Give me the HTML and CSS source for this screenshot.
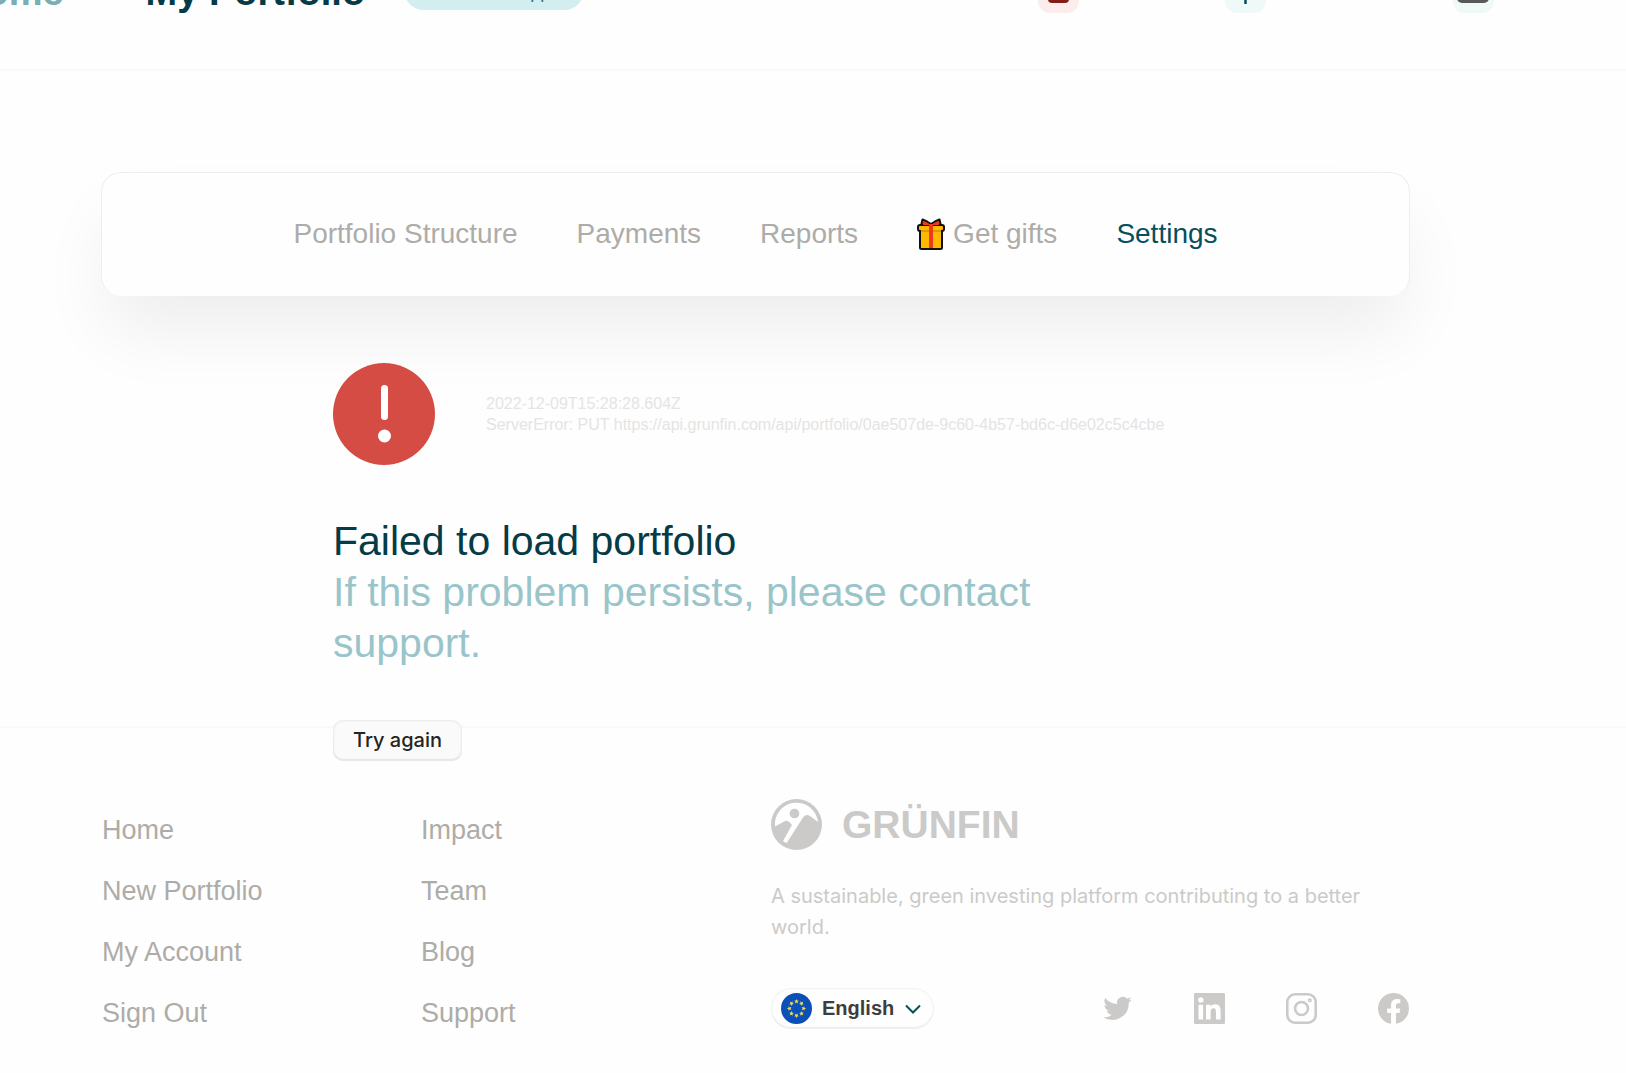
FILE: index.html
```
<!DOCTYPE html>
<html lang="en">
<head>
    <meta charset="UTF-8">
    <meta name="viewport" content="width=device-width, initial-scale=1">
    <title>My Portfolio</title>
    <link rel="stylesheet" href="styles.css">
</head>
<body>

    <header class="topbar">
        <nav class="breadcrumb">
            <a href="#" class="crumb">Home</a>
            <svg class="crumb-arrow" viewBox="0 0 12 24"><path d="M2 4l9 9-9 9"/></svg>
            <h1 class="crumb-current">My Portfolio</h1>
            <span class="status">Account is stopped</span>
        </nav>
        <div class="actions">
            <button class="action danger" aria-label="Stop">
                <svg viewBox="0 0 41 41"><rect x="10" y="10" width="21" height="21" rx="4" fill="#7f1d18"/></svg>
            </button>
            <button class="action" aria-label="Add">
                <svg viewBox="0 0 41 41"><path d="M20.500 9v23M9 20.500h23" stroke="#05505c" stroke-width="2.500"/></svg>
            </button>
            <button class="action" aria-label="Account">
                <svg viewBox="0 0 41 41"><rect x="4" y="9" width="32" height="22" rx="5" fill="#5a5757"/></svg>
            </button>
        </div>
    </header>

    <main>
        <nav class="tabs">
            <a href="#">Portfolio Structure</a>
            <a href="#">Payments</a>
            <a href="#">Reports</a>
            <a href="#" class="gifts">
                <svg viewBox="0 0 28 32">
                    <path d="M4 8L5.500 1.500 10 3.500 14 6l4-2.500 4.500-2L24 8z" fill="#f03a17" stroke="#111" stroke-width="2" stroke-linejoin="round"/>
                    <rect x="3" y="10" width="22" height="21" rx="1.500" fill="#ffb800" stroke="#111" stroke-width="2"/>
                    <rect x="1" y="7" width="26" height="6" rx="2" fill="#ffb800" stroke="#111" stroke-width="2"/>
                    <path d="M4 13h20" stroke="#e09a00" stroke-width="2"/>
                    <path d="M6 7l1-4 7 4 7-4 1 4z" fill="#f03a17"/>
                    <path d="M14 6v24" stroke="#f03a17" stroke-width="4"/>
                </svg>
                Get gifts
            </a>
            <a href="#" class="active">Settings</a>
        </nav>

        <section class="error">
            <div class="error-head">
                <svg class="error-icon" viewBox="0 0 102 102">
                    <circle cx="51" cy="51" r="51" fill="#d44c43"/>
                    <path d="M51.500 25.500v28" stroke="#fff" stroke-width="7" stroke-linecap="round"/>
                    <circle cx="51.500" cy="73" r="6.500" fill="#fff"/>
                </svg>
                <p class="error-details">2022-12-09T15:28:28.604Z<br>ServerError: PUT https://api.grunfin.com/api/portfolio/0ae507de-9c60-4b57-bd6c-d6e02c5c4cbe</p>
            </div>
            <h2>Failed to load portfolio</h2>
            <p class="error-hint">If this problem persists, please contact support.</p>
            <button class="retry">Try again</button>
        </section>
    </main>

    <footer>
        <ul class="links">
            <li><a href="#">Home</a></li>
            <li><a href="#">New Portfolio</a></li>
            <li><a href="#">My Account</a></li>
            <li><a href="#">Sign Out</a></li>
        </ul>
        <ul class="links">
            <li><a href="#">Impact</a></li>
            <li><a href="#">Team</a></li>
            <li><a href="#">Blog</a></li>
            <li><a href="#">Support</a></li>
        </ul>
        <div class="about">
            <div class="brand">
                <svg viewBox="0 0 51 51">
                    <circle cx="25.500" cy="25.500" r="25.500" fill="#cbcac9"/>
                    <path d="M4 27.500A21.500 21.500 0 0 1 47 23l-8-6q-4-2.500-7 1.500L16 43.500q-1.500 1-4-1.500L21 26q-4-5-7-4z" fill="#fff"/>
                    <circle cx="23.500" cy="14.500" r="4.800" fill="#cbcac9"/>
                </svg>
                <span>GRÜNFIN</span>
            </div>
            <p>A sustainable, green investing platform contributing to a better world.</p>
            <div class="about-bottom">
                <label class="language">
                    <svg class="flag" viewBox="0 0 31 31">
                        <circle cx="15.500" cy="15.500" r="15.500" fill="#0b50b8"/>
                        <g fill="#f4d94a">
                            <path id="star" d="M15.500 6l.7 1.500 1.600.2-1.200 1.100.3 1.600-1.400-.8-1.400.8.300-1.600-1.200-1.100 1.600-.2z"/>
                            <use href="#star" transform="rotate(45 15.500 15.500)"/>
                            <use href="#star" transform="rotate(90 15.500 15.500)"/>
                            <use href="#star" transform="rotate(135 15.500 15.500)"/>
                            <use href="#star" transform="rotate(180 15.500 15.500)"/>
                            <use href="#star" transform="rotate(225 15.500 15.500)"/>
                            <use href="#star" transform="rotate(270 15.500 15.500)"/>
                            <use href="#star" transform="rotate(315 15.500 15.500)"/>
                        </g>
                    </svg>
                    <select aria-label="Language">
                        <option>English</option>
                    </select>
                    <svg class="chevron" viewBox="0 0 16 10"><path d="M1 1.500l7 7 7-7"/></svg>
                </label>
                <div class="social">
                    <a href="#" aria-label="Twitter">
                        <svg viewBox="0 0 24 24"><path d="M23 5.100c-.8.400-1.700.6-2.600.7.900-.6 1.600-1.400 2-2.500-.9.500-1.900.9-2.900 1.100A4.500 4.500 0 0 0 11.800 8.500C8 8.300 4.700 6.500 2.500 3.800c-1.200 2-.6 4.700 1.400 6-.7 0-1.400-.2-2-.6 0 2.200 1.500 4.100 3.600 4.500-.7.200-1.400.2-2 .1.600 1.800 2.200 3.100 4.200 3.100A9.100 9.100 0 0 1 1 18.800 12.800 12.800 0 0 0 20.700 7.400c.9-.6 1.700-1.400 2.300-2.300z"/></svg>
                    </a>
                    <a href="#" aria-label="LinkedIn">
                        <svg viewBox="0 0 24 24"><path fill-rule="evenodd" d="M1 0h22a1 1 0 0 1 1 1v22a1 1 0 0 1-1 1H1a1 1 0 0 1-1-1V1a1 1 0 0 1 1-1zM3.500 9v11.500h3.600V9zM5.300 3.300a2.100 2.100 0 1 0 0 4.200 2.100 2.100 0 0 0 0-4.200zM9.300 9v11.500h3.600v-5.700c0-1.500.3-3 2.200-3s1.900 1.800 1.900 3.100v5.600h3.600v-6.300c0-3.100-.7-5.500-4.300-5.500-1.700 0-2.900 1-3.400 1.900V9z"/></svg>
                    </a>
                    <a href="#" aria-label="Instagram">
                        <svg viewBox="0 0 24 24" class="outline"><rect x="1" y="1" width="22" height="22" rx="6"/><circle cx="12" cy="12" r="5"/><circle cx="18.400" cy="5.600" r=".6"/></svg>
                    </a>
                    <a href="#" aria-label="Facebook">
                        <svg viewBox="0 0 24 24"><path d="M24 12A12 12 0 1 0 10.100 23.900v-8.400H7.100V12h3V9.400c0-3 1.800-4.700 4.600-4.700 1.300 0 2.600.2 2.600.2v3h-1.500c-1.500 0-1.900.9-1.900 1.900V12h3.300l-.5 3.500h-2.800v8.400A12 12 0 0 0 24 12z"/></svg>
                    </a>
                </div>
            </div>
        </div>
    </footer>

</body>
</html>
```
FILE: styles.css
```
* {
    box-sizing: border-box;
    margin: 0;
    padding: 0;
}
body {
    font-family: "Liberation Sans", Arial, sans-serif;
    background-color: #fefefe;
    color: #043b46;
    overflow: hidden;
}
a {
    color: inherit;
    text-decoration: none;
}
svg {
    display: block;
    flex-shrink: 0;
}
button {
    font-family: inherit;
    border: none;
    cursor: pointer;
}

.topbar {
    display: flex;
    justify-content: space-between;
    align-items: center;
    height: 142px;
    margin-top: -71px;
    padding: 0 132px 20px 0;
    border-bottom: 2px solid #f9f9f9;
}
.breadcrumb {
    display: flex;
    align-items: center;
    margin-left: -42px;
}
.crumb,
.crumb-current {
    padding-top: 6px;
    font-size: 38px;
    font-weight: bold;
    line-height: 51px;
    white-space: nowrap;
}
.crumb {
    color: #79aeb6;
}
.crumb-arrow {
    width: 12px;
    height: 24px;
    margin: 0 35px;
    fill: none;
    stroke: #bdbcbb;
    stroke-width: 2;
}
.status {
    margin-left: 39px;
    padding: 5px 14px 0 14px;
    border-radius: 20px;
    background-color: #d3eeee;
    color: #2b7480;
    font-size: 18px;
    line-height: 36px;
    white-space: nowrap;
}
.actions {
    display: flex;
    padding-top: 6px;
}
.action {
    width: 41px;
    height: 41px;
    margin-left: 187px;
    border-radius: 12px;
    background-color: #eff9f8;
}
.action svg {
    width: 41px;
    height: 41px;
}
.action.danger {
    background-color: #fceceb;
}
.action.danger + .action {
    margin-left: 146px;
}

/* Tabs */
main {
    padding: 101px 216px 0 101px;
}
.tabs {
    display: flex;
    justify-content: center;
    align-items: center;
    gap: 59px;
    padding: 44px 20px 46px;
    border: 1px solid #eeeeee;
    border-bottom: none;
    border-radius: 20px;
    background-color: #fefefe;
    box-shadow: 0 41px 72px -8px rgba(0, 0, 0, 0.07);
    color: #adaca8;
    font-size: 28px;
    line-height: 33px;
    white-space: nowrap;
}
.tabs .active {
    color: #064f5c;
}
.gifts {
    display: flex;
    align-items: center;
    gap: 8px;
}
.gifts svg {
    width: 28px;
    height: 32px;
}

/* Error message */
.error {
    padding: 67px 0 0 232px;
}
.error-head {
    display: flex;
    align-items: center;
    gap: 51px;
    margin-bottom: 51px;
}
.error-icon {
    width: 102px;
    height: 102px;
}
.error-details {
    color: #e5e4e3;
    font-size: 16px;
    line-height: 21px;
}
.error h2,
.error-hint {
    max-width: 820px;
    font-size: 41px;
    font-weight: normal;
    line-height: 51px;
}
.error-hint {
    color: #99c5ca;
}
.retry {
    position: relative;
    z-index: 1;
    margin-top: 51px;
    padding: 0 20px;
    border-radius: 10px;
    background-color: #fafafa;
    box-shadow: inset 0 0 2px 1px #e9e9e9, inset 0 -2px 1px #e4e4e4;
    color: #242424;
    font-family: Inter, sans-serif;
    font-size: 20px;
    font-weight: 500;
    line-height: 41px;
}

/* Footer */
footer {
    display: grid;
    grid-template-columns: 319px 350px 1fr;
    margin-top: -35px;
    padding: 71px 217px 40px 102px;
    border-top: 2px solid #f9f9f9;
}
.links {
    display: flex;
    flex-direction: column;
    gap: 28px;
    padding-top: 15px;
    list-style: none;
    color: #adaca8;
    font-size: 27px;
    line-height: 33px;
}
.about {
    color: #cbcac9;
}
.brand {
    display: flex;
    align-items: center;
    gap: 20px;
    margin-bottom: 31px;
    font-size: 39px;
    font-weight: bold;
    line-height: 51px;
}
.brand svg {
    width: 51px;
    height: 51px;
}
.about p {
    max-width: 612px;
    font-family: Inter, sans-serif;
    font-size: 20px;
    line-height: 31px;
}
.about-bottom {
    display: flex;
    justify-content: space-between;
    align-items: center;
    margin-top: 45px;
}
.language {
    display: flex;
    align-items: center;
    gap: 10px;
    height: 41px;
    padding: 0 13px 0 10px;
    border-radius: 20px;
    background-color: #fefefe;
    box-shadow: inset 0 0 2px 1px #f1f1f1, inset 0 -2px 1px #ececec;
}
.language select {
    appearance: none;
    border: none;
    background: none;
    color: #3d3d3d;
    font-family: inherit;
    font-size: 20px;
    font-weight: bold;
    line-height: 31px;
}
.flag {
    width: 31px;
    height: 31px;
}
.chevron {
    width: 16px;
    height: 10px;
    fill: none;
    stroke: #064f5c;
    stroke-width: 2;
}
.social {
    display: flex;
    gap: 61px;
}
.social svg {
    width: 31px;
    height: 31px;
    fill: #cbcac9;
}
.social .outline {
    fill: none;
    stroke: #cbcac9;
    stroke-width: 2;
}
```
